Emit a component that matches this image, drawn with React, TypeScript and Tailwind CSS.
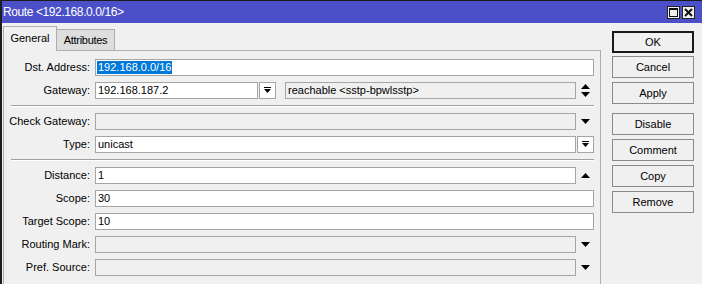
import React from 'react'

const font = "font-['Liberation_Sans',Arial,sans-serif]"

const DownArrow = () => (
  <svg width="9" height="5" viewBox="0 0 9 5">
    <path d="M0 0H9L4.5 5Z" fill="#000" />
  </svg>
)

const UpArrow = () => (
  <svg width="9" height="5" viewBox="0 0 9 5">
    <path d="M0 5H9L4.5 0Z" fill="#000" />
  </svg>
)

const UpDown = () => (
  <svg width="9" height="13" viewBox="0 0 9 13">
    <path d="M0 5H9L4.5 0Z" fill="#000" />
    <path d="M0 8H9L4.5 13Z" fill="#000" />
  </svg>
)

const DropGlyph = () => (
  <svg width="7" height="7" viewBox="0 0 7 7">
    <rect x="0" y="0" width="7" height="1" fill="#000" />
    <path d="M0 2H7L3.5 6Z" fill="#000" />
  </svg>
)

interface FieldProps {
  value?: string
  width: string
  disabled?: boolean
  selected?: boolean
}

const Field: React.FC<FieldProps> = ({ value, width, disabled, selected }) => (
  <div
    className={`${width} h-[17px] border border-[#a5a5a5] flex items-center pl-[1px] ${
      disabled ? 'bg-[#f0f0f0]' : 'bg-white'
    }`}
  >
    {value && (
      <span className={`leading-[13px] px-[1px] ${selected ? 'bg-[#0078d7] text-white' : ''}`}>
        {value}
      </span>
    )}
  </div>
)

const Label = ({ text }: { text: string }) => (
  <div className="w-[91px] pr-[5px] text-right shrink-0">{text}</div>
)

const Row = ({ children }: { children: React.ReactNode }) => (
  <div className="flex items-center h-[17px]">{children}</div>
)

const ArrowSlot = ({ children }: { children: React.ReactNode }) => (
  <div className="w-[18px] flex justify-center items-center">{children}</div>
)

const SmallButton = () => (
  <div className="ml-[1px] w-[17px] h-[17px] border border-[#a5a5a5] bg-white flex items-center justify-center">
    <DropGlyph />
  </div>
)

const Separator = () => (
  <div className="ml-[7px] w-[583px] h-[2px] border-t border-[#a0a0a0] border-b border-b-white" />
)

const Btn = ({ text, mt, primary }: { text: string; mt: string; primary?: boolean }) => (
  <div
    className={`${mt} w-[82px] h-[22px] flex items-center justify-center bg-[#f0f0f0] ${
      primary ? 'border-2 border-[#1a1a1a]' : 'border border-[#8a8a8a]'
    }`}
  >
    {text}
  </div>
)

export default function App() {
  return (
    <div
      className={`${font} w-[702px] h-[284px] overflow-hidden bg-[#f0f0f0] border-t border-l-2 border-[#1c1c1c] text-[11px] text-black`}
    >
      <div className="h-[22px] bg-[#4b50c8] flex items-center justify-between pl-[1px] pr-[7px]">
        <span className="text-white text-[12px] tracking-[-0.4px]">Route &lt;192.168.0.0/16&gt;</span>
        <div className="flex gap-[2px]">
          <div className="w-[13px] h-[13px] border border-[#222] bg-[#f0f0f0] flex items-center justify-center">
            <div className="w-[9px] h-[9px] border border-[#111] border-t-2" />
          </div>
          <div className="w-[13px] h-[13px] border border-[#222] bg-[#f0f0f0] flex items-center justify-center">
            <svg width="9" height="9" viewBox="0 0 9 9">
              <path d="M1 1L8 8M8 1L1 8" stroke="#111" strokeWidth="2" />
            </svg>
          </div>
        </div>
      </div>

      <div className="flex">
        <div className="ml-[1px] w-[598px]">
          <div className="flex items-end h-[27px]">
            <div className="relative z-10 -mb-px w-[54px] h-[25px] border border-b-0 border-[#adadad] bg-[#f0f0f0] flex items-center justify-center pb-[2px]">
              General
            </div>
            <div className="w-[58px] h-[21px] border border-l-0 border-b-0 border-[#adadad] bg-[#dedede] flex items-center justify-center tracking-[-0.3px]">
              Attributes
            </div>
          </div>
          <div className="h-[240px] border border-b-0 border-[#adadad] pt-[8px] flex flex-col gap-[6px]">
            <Row>
              <Label text="Dst. Address:" />
              <Field width="w-[499px]" value="192.168.0.0/16" selected />
            </Row>
            <Row>
              <Label text="Gateway:" />
              <Field width="w-[163px]" value="192.168.187.2" />
              <SmallButton />
              <div className="ml-[9px]">
                <Field width="w-[291px]" value="reachable <sstp-bpwlsstp>" disabled />
              </div>
              <ArrowSlot>
                <UpDown />
              </ArrowSlot>
            </Row>
            <Separator />
            <Row>
              <Label text="Check Gateway:" />
              <Field width="w-[481px]" disabled />
              <ArrowSlot>
                <DownArrow />
              </ArrowSlot>
            </Row>
            <Row>
              <Label text="Type:" />
              <Field width="w-[481px]" value="unicast" />
              <SmallButton />
            </Row>
            <Separator />
            <Row>
              <Label text="Distance:" />
              <Field width="w-[481px]" value="1" />
              <ArrowSlot>
                <UpArrow />
              </ArrowSlot>
            </Row>
            <Row>
              <Label text="Scope:" />
              <Field width="w-[499px]" value="30" />
            </Row>
            <Row>
              <Label text="Target Scope:" />
              <Field width="w-[499px]" value="10" />
            </Row>
            <Row>
              <Label text="Routing Mark:" />
              <Field width="w-[481px]" disabled />
              <ArrowSlot>
                <DownArrow />
              </ArrowSlot>
            </Row>
            <Row>
              <Label text="Pref. Source:" />
              <Field width="w-[481px]" disabled />
              <ArrowSlot>
                <DownArrow />
              </ArrowSlot>
            </Row>
          </div>
        </div>

        <div className="ml-[11px] mt-[8px] flex flex-col">
          <Btn text="OK" mt="mt-0" primary />
          <Btn text="Cancel" mt="mt-[3px]" />
          <Btn text="Apply" mt="mt-[4px]" />
          <Btn text="Disable" mt="mt-[9px]" />
          <Btn text="Comment" mt="mt-[4px]" />
          <Btn text="Copy" mt="mt-[4px]" />
          <Btn text="Remove" mt="mt-[4px]" />
        </div>
      </div>
    </div>
  )
}
